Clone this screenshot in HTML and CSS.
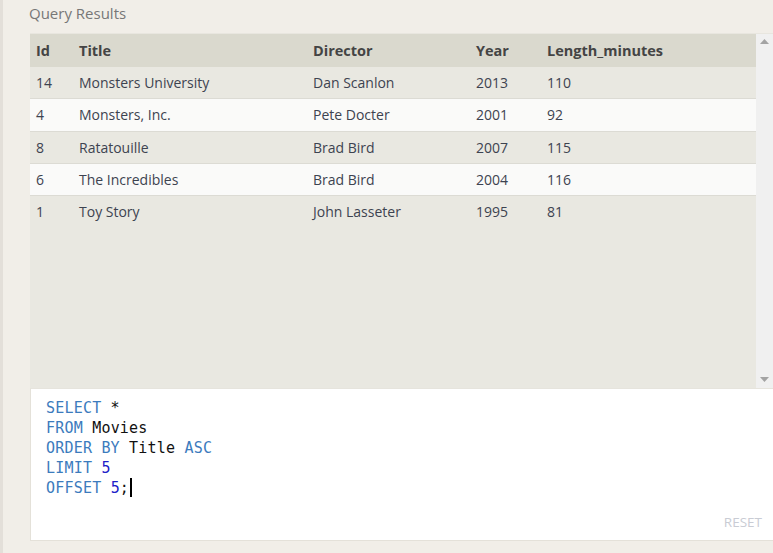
FILE: index.html
```html
<!DOCTYPE html>
<html>
<head>
<meta charset="utf-8">
<link rel="stylesheet" href="styles.css">
</head>
<body>
<div class="page">
  <div class="heading">Query Results</div>
  <div class="results">
    <div class="table-wrap">
      <table class="grid">
        <thead>
          <tr><th class="c-id">Id</th><th class="c-title">Title</th><th class="c-dir">Director</th><th class="c-year">Year</th><th>Length_minutes</th></tr>
        </thead>
        <tbody>
          <tr><td>14</td><td>Monsters University</td><td>Dan Scanlon</td><td>2013</td><td>110</td></tr>
          <tr><td>4</td><td>Monsters, Inc.</td><td>Pete Docter</td><td>2001</td><td>92</td></tr>
          <tr><td>8</td><td>Ratatouille</td><td>Brad Bird</td><td>2007</td><td>115</td></tr>
          <tr><td>6</td><td>The Incredibles</td><td>Brad Bird</td><td>2004</td><td>116</td></tr>
          <tr><td>1</td><td>Toy Story</td><td>John Lasseter</td><td>1995</td><td>81</td></tr>
        </tbody>
      </table>
    </div>
    <div class="scrollbar">
      <svg class="arrow" width="9" height="5" viewBox="0 0 9 5"><polygon points="0,5 9,5 4.5,0" fill="#a3a3a3"/></svg>
      <svg class="arrow" width="9" height="5" viewBox="0 0 9 5"><polygon points="0,0 9,0 4.5,5" fill="#a3a3a3"/></svg>
    </div>
  </div>
  <div class="editor">
    <pre class="code"><span class="kw">SELECT</span> *
<span class="kw">FROM</span> Movies
<span class="kw">ORDER BY</span> Title <span class="kw">ASC</span>
<span class="kw">LIMIT</span> <span class="num">5</span>
<span class="kw">OFFSET</span> <span class="num">5</span>;<span class="cursor"></span></pre>
    <div class="footer"><span class="reset">RESET</span></div>
  </div>
</div>
</body>
</html>
```
FILE: styles.css
```css
html, body {
  margin: 0;
  padding: 0;
}
body {
  background: #f1eee8;
  border-left: 3px solid #e3dfd9;
  height: 553px;
  box-sizing: border-box;
  font-family: "Open Sans", "Noto Sans", sans-serif;
}
.page {
  padding-left: 27px;
}
.heading {
  font-size: 15px;
  color: #777;
  height: 33px;
  line-height: 26px;
  margin-left: -1px;
}
.results {
  display: flex;
  height: 355px;
  border-top: 1px solid #e8e6df;
  box-sizing: border-box;
}
.table-wrap {
  flex: 1;
  background: #e9e8e1;
}
.grid {
  width: 100%;
  border-collapse: collapse;
  font-size: 14px;
  color: #3d4350;
}
.grid th {
  background: #dad9ce;
  text-align: left;
  font-weight: 700;
  color: #444;
  height: 33px;
  padding: 0 0 0 6px;
  font-size: 14.5px;
}
.grid td {
  height: 31.3px;
  padding: 0 0 0 6px;
  border-bottom: 1px solid #dcdbd4;
}
.grid tbody tr:nth-child(even) td {
  background: #fafaf9;
}
.grid tbody tr:last-child td {
  border-bottom: none;
}
.c-id { width: 37px; }
.c-title { width: 228px; }
.c-dir { width: 157px; }
.c-year { width: 65px; }
.scrollbar {
  width: 17px;
  background: #f0f0f0;
  display: flex;
  flex-direction: column;
  justify-content: space-between;
  align-items: center;
  padding: 5px 0 6px;
  box-sizing: border-box;
}
.arrow { display: block; }
.editor {
  background: #fff;
  height: 153px;
  border-left: 1px solid #e4e1d9;
  border-bottom: 1px solid #e4e1d9;
  border-top: 1px solid #e6e4dd;
  box-sizing: border-box;
  display: flex;
  flex-direction: column;
}
.code {
  margin: 0;
  padding: 9px 0 0 15px;
  font-family: "DejaVu Sans Mono", "Liberation Mono", monospace;
  font-size: 15px;
  line-height: 20px;
  color: #111;
  flex: 1;
  letter-spacing: 0.2px;
}
.kw { color: #3c7bbd; }
.num { color: #2020c8; }
.cursor {
  display: inline-block;
  width: 2px;
  height: 19px;
  background: #000;
  vertical-align: -4px;
  margin-left: 1px;
}
.footer {
  display: flex;
  justify-content: flex-end;
  padding: 0 11px 9px 0;
}
.reset {
  font-size: 13.5px;
  color: #c9ccd4;
}
```
